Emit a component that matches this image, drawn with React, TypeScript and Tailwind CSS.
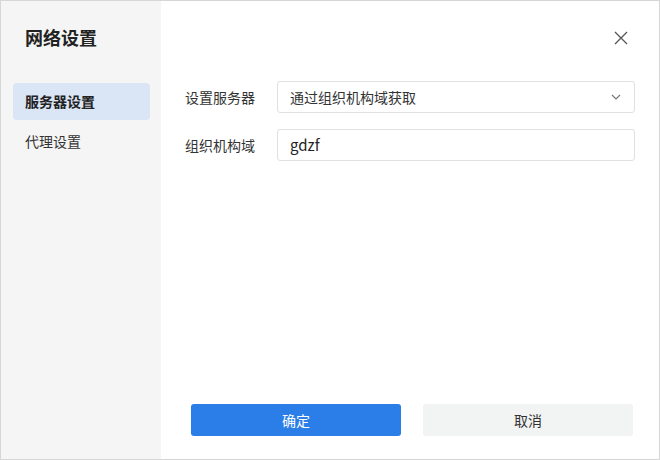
import React from "react";

const font = { fontFamily: '"Noto Sans CJK SC", "Noto Sans", sans-serif' };

export default function App() {
  return (
    <div className="w-[660px] h-[460px] flex border border-[#d6d6d6] bg-white text-[#333]" style={font}>
      <aside className="w-[160px] shrink-0 bg-[#f5f5f5] flex flex-col pt-[22px] pl-[12px] pr-[11px]">
        <div className="pl-[12px] text-[18px] leading-[28px] font-bold text-[#222] h-[28px]">网络设置</div>
        <div className="mt-[32px] h-[37px] rounded-[4px] bg-[#dae5f5] flex items-center pl-[12px] text-[14px] font-bold text-[#222]">服务器设置</div>
        <div className="mt-[3px] h-[37px] flex items-center pl-[12px] text-[14px] text-[#333]">代理设置</div>
      </aside>
      <main className="flex-1 flex flex-col relative">
        <button className="absolute right-[30px] top-[29px] w-[16px] h-[16px] flex items-center justify-center">
          <svg width="14" height="14" viewBox="0 0 14 14" fill="none" stroke="#555" strokeWidth="1.3">
            <path d="M1 1L13 13M13 1L1 13" />
          </svg>
        </button>
        <div className="pt-[80px] pl-[24px] pr-[24px] flex flex-col gap-[16px]">
          <div className="flex items-center">
            <div className="w-[92px] text-[14px] text-[#333]">设置服务器</div>
            <div className="flex-1 h-[32px] border border-[#e0e0e0] rounded-[3px] flex items-center justify-between pl-[12px] pr-[12px] text-[14px] text-[#333]">
              <span>通过组织机构域获取</span>
              <svg width="12" height="8" viewBox="0 0 12 8" fill="none" stroke="#777" strokeWidth="1.2">
                <path d="M2 2L6 6L10 2" />
              </svg>
            </div>
          </div>
          <div className="flex items-center">
            <div className="w-[92px] text-[14px] text-[#333]">组织机构域</div>
            <div className="flex-1 h-[32px] border border-[#e0e0e0] rounded-[3px] flex items-center pl-[12px] text-[15px] text-[#222]">gdzf</div>
          </div>
        </div>
        <div className="mt-auto mb-[23px] pl-[30px] pr-[26px] flex gap-[22px]">
          <button className="w-[210px] h-[32px] rounded-[3px] bg-[#2b7ee8] text-white text-[14px]">确定</button>
          <button className="w-[210px] h-[32px] rounded-[3px] bg-[#f2f3f3] text-[#333] text-[14px]">取消</button>
        </div>
      </main>
    </div>
  );
}
